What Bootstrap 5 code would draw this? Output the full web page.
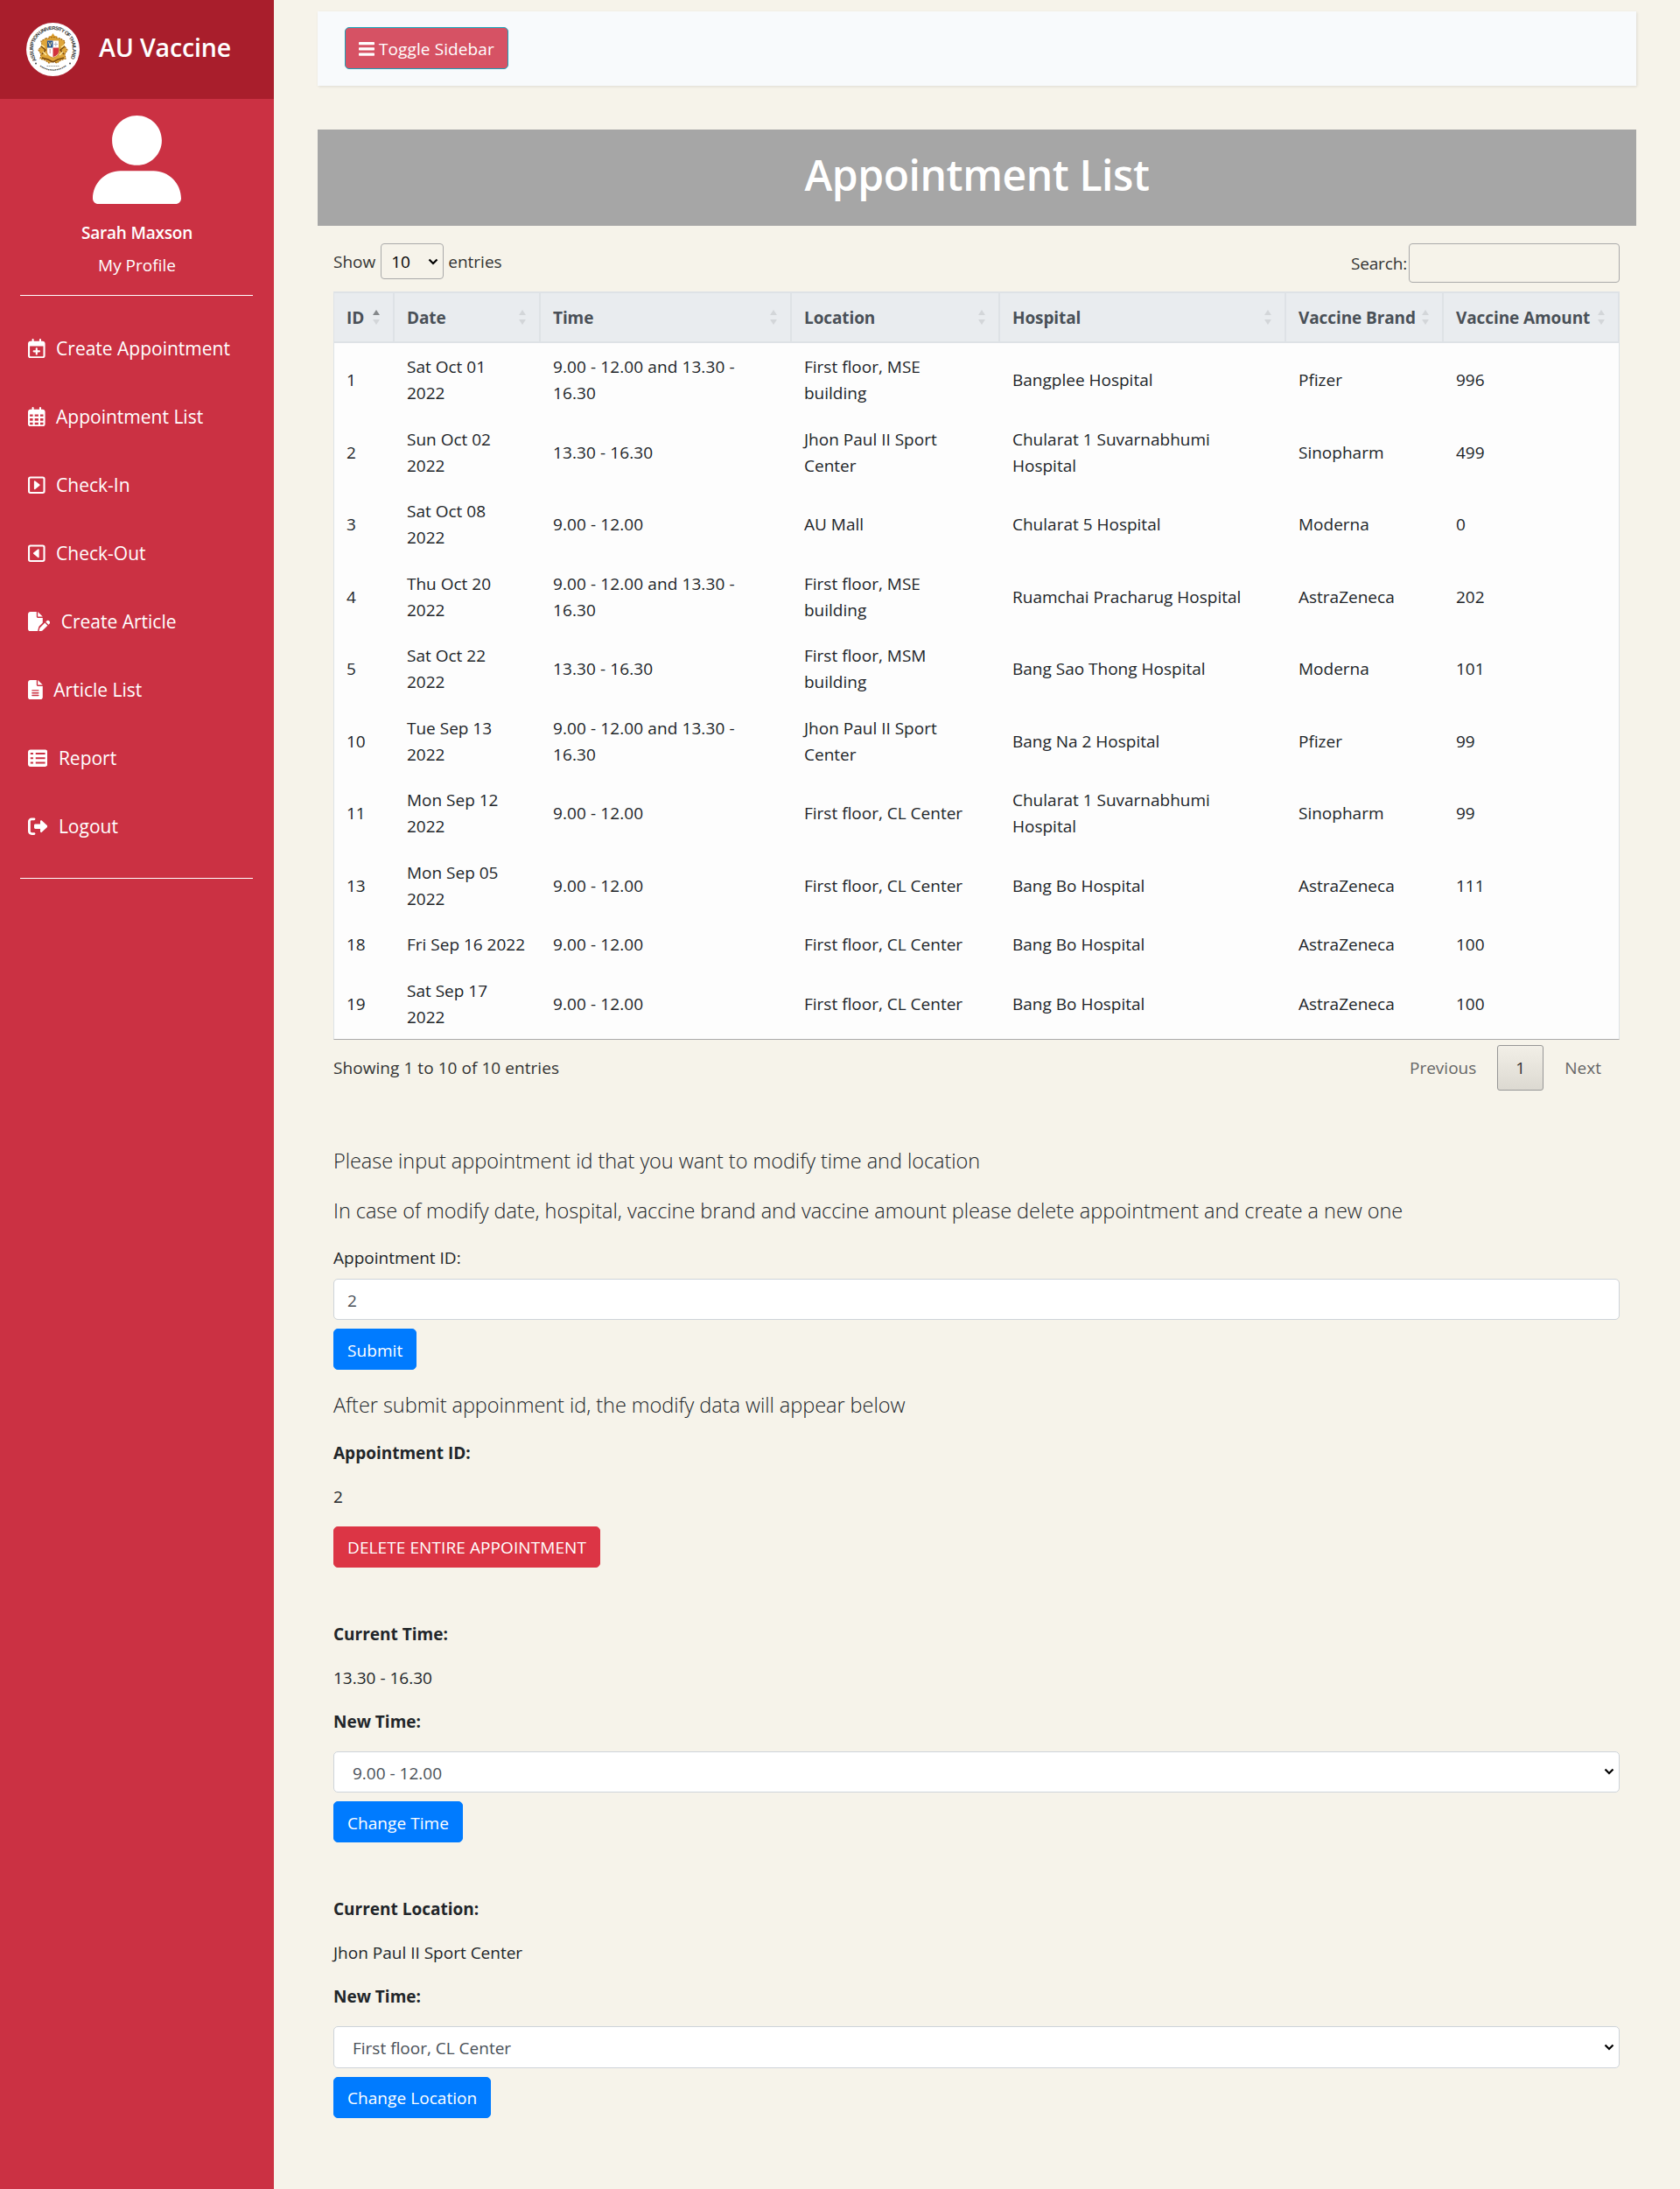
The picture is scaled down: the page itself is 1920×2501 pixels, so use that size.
<!DOCTYPE html>
<html lang="en">
<head>
<meta charset="utf-8">
<meta name="viewport" content="width=device-width, initial-scale=1">
<title>AU Vaccine - Appointment List</title>
<link href="https://cdn.jsdelivr.net/npm/bootstrap@5.3.0/dist/css/bootstrap.min.css" rel="stylesheet">
<style>
html{font-size:20px}
body{font-family:"Open Sans","Noto Sans",sans-serif;font-size:19px;line-height:30px;color:#212529;background:#f6f3ea}
p{padding-top:1px;margin-bottom:19px}

/* sidebar */
.side{width:313px;min-height:2501px;background:#cb3143;color:#fff}
.side-head{height:113px;background:#a91e2c;padding-left:30px}
.side-title{font-size:28.5px;font-weight:600;letter-spacing:-.15px;margin:0 0 6px 22px;line-height:36px}
.side-rule{height:1px;background:#fff;margin:0 24px 0 23px}
.avatar{display:block;width:101px;height:101px;margin:19px auto 18px}
.user-name{letter-spacing:-.2px;margin-bottom:6.5px}
.user-box{padding-bottom:19.5px}
.side-nav{padding:22px 0 19px}
.side-nav a{height:78px;font-size:21px;color:#fff;padding:0 0 2px 32px;text-decoration:none}
.side-nav svg{height:22.4px;margin-right:12.500px;fill:currentColor}

/* main column */
.main-area{padding:13px 50px 0}
.topbar{height:85px;background:#f8fafc;box-shadow:1px 1px 3px rgba(0,0,0,.1);padding:18px 31px}
.btn{--bs-btn-font-size:19px;--bs-btn-line-height:30px;--bs-btn-border-radius:5px;padding:8.5px 15px 6.5px;height:47px;white-space:nowrap;letter-spacing:.06px}
.btn-primary{--bs-btn-bg:#007bff;--bs-btn-border-color:#007bff}
.btn-danger{--bs-btn-bg:#dc3545;--bs-btn-border-color:#dc3545;letter-spacing:.09px}
.btn-toggle{background:#d65264;border:1px solid #17a2b8;color:#fff;height:48px;letter-spacing:.1px}
.btn-toggle svg{margin:-4px 5px 0 0}
.page-title{margin-top:50px;height:110px;background:#a6a6a6;color:#fff}
.page-title h1{font-size:48px;font-weight:600;letter-spacing:-.43px;line-height:60px;margin:0 0 7px}
.body-area{padding:0 19px 0 18px}

/* data table */
.tools{padding-top:20px;height:75px;color:#333}
.tools span{padding-top:1px}
.chev{--bs-form-select-bg-img:url("data:image/svg+xml,%3Csvg xmlns='http://www.w3.org/2000/svg' viewBox='0 0 12 8'%3E%3Cpath d='M1.500 1.500 6 6l4.500-4.500' fill='none' stroke='%23000' stroke-width='2.200'/%3E%3C/svg%3E");background-image:var(--bs-form-select-bg-img);background-size:12px 8px}
.len-select{width:72px;height:41px;border:1px solid #aaa;border-radius:4px;background-color:transparent;background-position:right 5px center;padding:1px 0 0 11px;margin:0 5px 0 6px;color:#000;font-size:19px}
.search-lbl{letter-spacing:-.15px}
.search-box{width:241px;height:45px;border:1px solid #aaa;border-radius:4px;background:transparent;margin-left:2px}
.appt{table-layout:fixed;width:1470px;border-collapse:separate;border-spacing:0;border:1px solid #dee2e6;border-bottom-color:#aaa;background:#fdfdfd}
.appt th{height:58px;background:#e9ecef;border:solid #dee2e6;border-width:1px 2px 2px 0;color:#495057;font-weight:700;letter-spacing:-.1px;padding:1px 0 0 14px;white-space:nowrap}
.appt th:last-child{border-right-width:1px}
.appt td{height:82.5px;padding:2px 0 0 14px;vertical-align:middle;white-space:nowrap}
.appt td:nth-child(3){letter-spacing:.1px}
.appt .one-line td{height:52.5px}
.sorter{display:flex;flex-direction:column;gap:5px;margin:-2px 15px 0 0}
.sorter i{border:4px solid transparent}
.sorter i:first-child{border-top:0;border-bottom:6px solid #d3d6d9}
.sorter i:last-child{border-bottom:0;border-top:6px solid #d3d6d9}
.sorter.asc i:first-child{border-bottom-color:#85888b}
.foot{height:118.5px;color:#333}
.foot-info{padding-top:17px;letter-spacing:.06px}
.pager{padding:5.5px 21px 0 0;color:#666}
.page-no{width:53px;height:52px;border:1px solid #979797;border-radius:3px;background:linear-gradient(#f2efe7,#dcd9d1);line-height:51px;text-align:center;margin:0 24px;color:#333}

/* forms */
.note{font-size:23.5px;font-weight:300;line-height:37.5px;letter-spacing:-.04px}
.note-after{margin-top:21px}
.field{height:47.5px;border:1px solid #ced4da;border-radius:5px;background-color:#fff;color:#495057;font-size:19px;padding:3px 4px 0 15px;margin-bottom:10px}
.pick{padding-left:21px;background-position:right 5px center}
.fld-label{display:block;margin-bottom:9px}
.step-gap{margin-bottom:60px}
</style>
</head>
<body>
<div class="d-flex">
<aside class="side flex-shrink-0">
  <div class="side-head d-flex align-items-center">
    <svg width="61" height="61" viewBox="0 0 61 61">
      <defs>
        <path id="arcTop" d="M11.800 43A22.500 22.500 0 1 1 49.200 43"/>
        <path id="arcLow" d="M12.500 48.500A25.500 25.500 0 0 0 48.500 48.500"/>
      </defs>
      <circle cx="30.500" cy="30.500" r="30.500" fill="#fff"/>
      <text font-family="Liberation Sans" font-size="5.800" font-weight="700" fill="#333"><textPath href="#arcTop" textLength="94">ASSUMPTION UNIVERSITY OF THAILAND</textPath></text>
      <text font-family="Noto Sans" font-size="5" font-weight="700" fill="#444"><textPath href="#arcLow" startOffset="3" textLength="34">••••••••••••••••</textPath></text>
      <circle cx="11" cy="46.500" r="1" fill="#444"/><circle cx="50" cy="46.500" r="1" fill="#444"/>
      <path d="M23.500 49.500h14" stroke="#999" stroke-width="1" stroke-dasharray="1.500 .6"/>
      <path d="M30.500 12l2 3 3 .5-1 3h-8l-1-3 3-.5z" fill="#d99a2b"/>
      <path d="M22 18l8.500-1.500L39 18l5 3-1 5 4 5-3 5 1 5-6 2-4 3-4.500-2-4.500 2-4-3-6-2 1-5-3-5 4-5-1-5z" fill="#dfa63a" stroke="#a96d18" stroke-width="1.200" stroke-dasharray="2 1"/>
      <path d="M17 27l5 4-4 5M44 27l-5 4 4 5M18 40l7 2 5.500 3 5.500-3 7-2" fill="none" stroke="#7a4a12" stroke-width="1.500"/>
      <path d="M17 25l4 3M44 25l-4 3M19 33l4 4M42 33l-4 4" stroke="#ffe9a0" stroke-width="1.500"/>
      <path d="M23.500 20h14v13q0 5-7 7-7-2-7-7z" fill="#fff" stroke="#c78a25" stroke-width=".8"/>
      <path d="M24 20.500h6.500v8H24z" fill="#2b568f"/>
      <path d="M30.500 28.500H37V33q0 4-6.500 6.300z" fill="#d2323c"/>
      <path d="M25.500 22l1.700 5 1.700-5" fill="none" stroke="#e9dca0" stroke-width="1"/>
      <path d="M33.800 22v5M31.500 24.500h4.600" stroke="#b9b9c4" stroke-width="1"/>
      <path d="M27.200 30v5" stroke="#d9a0a0" stroke-width="1.200"/>
    </svg>
    <span class="side-title">AU Vaccine</span>
  </div>
  <div class="user-box text-center">
    <svg class="avatar" viewBox="0 0 512 512" fill="#fff"><path d="M256 288c79.500 0 144-64.500 144-144S335.500 0 256 0 112 64.500 112 144s64.500 144 144 144zM352 320H160C71.600 320 0 391.600 0 480c0 17.700 14.300 32 32 32h448c17.700 0 32-14.300 32-32 0-88.400-71.600-160-160-160z"/></svg>
    <div class="user-name fw-semibold">Sarah Maxson</div>
    <div>My Profile</div>
  </div>
  <div class="side-rule"></div>
  <nav class="side-nav">
    <a href="#" class="d-flex align-items-center"><svg viewBox="0 0 448 512"><path d="M224 232C237.300 232 248 242.700 248 256V304H296C309.300 304 320 314.700 320 328C320 341.300 309.300 352 296 352H248V400C248 413.300 237.300 424 224 424C210.700 424 200 413.300 200 400V352H152C138.700 352 128 341.300 128 328C128 314.700 138.700 304 152 304H200V256C200 242.700 210.700 232 224 232zM152 64H296V24C296 10.750 306.700 0 320 0C333.300 0 344 10.750 344 24V64H384C419.300 64 448 92.650 448 128V448C448 483.300 419.300 512 384 512H64C28.650 512 0 483.300 0 448V128C0 92.650 28.650 64 64 64H104V24C104 10.750 114.700 0 128 0C141.300 0 152 10.750 152 24V64zM48 448C48 456.800 55.160 464 64 464H384C392.800 464 400 456.800 400 448V192H48V448z"/></svg>Create Appointment</a>
    <a href="#" class="d-flex align-items-center"><svg viewBox="0 0 448 512"><path d="M152 64H296V24C296 10.750 306.700 0 320 0C333.300 0 344 10.750 344 24V64H384C419.300 64 448 92.650 448 128V448C448 483.300 419.300 512 384 512H64C28.650 512 0 483.300 0 448V128C0 92.650 28.650 64 64 64H104V24C104 10.750 114.700 0 128 0C141.300 0 152 10.750 152 24V64zM48 248H128V192H48V248zM48 296V360H128V296H48zM176 296V360H272V296H176zM320 296V360H400V296H320zM400 192H320V248H400V192zM400 408H320V464H384C392.800 464 400 456.800 400 448V408zM272 408H176V464H272V408zM128 408H48V448C48 456.800 55.160 464 64 464H128V408zM272 192H176V248H272V192z"/></svg>Appointment List</a>
    <a href="#" class="d-flex align-items-center"><svg viewBox="0 0 448 512"><rect x="24" y="56" width="400" height="400" rx="40" fill="none" stroke="#fff" stroke-width="48"/><path d="M176 160v192l118-96z" stroke="#fff" stroke-width="36" stroke-linejoin="round"/></svg>Check-In</a>
    <a href="#" class="d-flex align-items-center"><svg viewBox="0 0 448 512"><rect x="24" y="56" width="400" height="400" rx="40" fill="none" stroke="#fff" stroke-width="48"/><path d="M272 160v192l-118-96z" stroke="#fff" stroke-width="36" stroke-linejoin="round"/></svg>Check-Out</a>
    <a href="#" class="d-flex align-items-center"><svg viewBox="0 0 576 512"><path d="M0 64C0 28.700 28.700 0 64 0H224V128c0 17.700 14.300 32 32 32H384V285.700l-86.800 86.800c-10.300 10.300-17.500 23.100-21 37.200l-18.700 74.900c-2.300 9.200-1.800 18.800 1.300 27.500H64c-35.300 0-64-28.700-64-64V64zM384 128H256V0L384 128zM549.800 235.700l14.400 14.400c15.600 15.600 15.600 40.900 0 56.600l-29.400 29.400-71-71 29.400-29.400c15.600-15.600 40.900-15.600 56.600 0zM311.900 417L441.100 287.800l71 71L382.900 487.900c-4.100 4.100-9.200 7-14.900 8.400l-60.100 15c-5.500 1.400-11.200-.2-15.200-4.200s-5.600-9.700-4.200-15.200l15-60.100c1.400-5.600 4.300-10.800 8.400-14.900z"/></svg>Create Article</a>
    <a href="#" class="d-flex align-items-center"><svg viewBox="0 0 384 512"><path fill-rule="evenodd" d="M64 0C28.700 0 0 28.700 0 64V448c0 35.300 28.700 64 64 64H320c35.300 0 64-28.700 64-64V160H256c-17.700 0-32-14.300-32-32V0H64zM256 0V128H384L256 0zM112 256H272c8.800 0 16 7.200 16 16s-7.200 16-16 16H112c-8.800 0-16-7.200-16-16s7.200-16 16-16zm0 64H272c8.800 0 16 7.200 16 16s-7.200 16-16 16H112c-8.800 0-16-7.200-16-16s7.200-16 16-16zm0 64H272c8.800 0 16 7.200 16 16s-7.200 16-16 16H112c-8.800 0-16-7.200-16-16s7.200-16 16-16z"/></svg>Article List</a>
    <a href="#" class="d-flex align-items-center"><svg viewBox="0 0 512 512"><path fill-rule="evenodd" d="M64 32h384c35.300 0 64 28.700 64 64v320c0 35.300-28.700 64-64 64H64c-35.300 0-64-28.700-64-64V96c0-35.300 28.700-64 64-64zM64 112v48h72v-48zM200 112v48h248v-48zM64 232v48h72v-48zM200 232v48h248v-48zM64 352v48h72v-48zM200 352v48h248v-48z"/></svg>Report</a>
    <a href="#" class="d-flex align-items-center"><svg viewBox="0 0 512 512"><path d="M96 480h64C177.700 480 192 465.700 192 448S177.700 416 160 416H96c-17.670 0-32-14.330-32-32V128c0-17.670 14.330-32 32-32h64C177.700 96 192 81.670 192 64S177.700 32 160 32H96C42.980 32 0 74.980 0 128v256C0 437 42.980 480 96 480zM504.800 238.500l-144.100-136c-6.975-6.578-17.200-8.375-26-4.594c-8.803 3.797-14.510 12.470-14.510 22.050l-.0918 72l-128-.001c-17.690 0-32.020 14.330-32.020 32v64c0 17.670 14.340 32 32.020 32l128 .001l.0918 71.100c0 9.578 5.707 18.250 14.510 22.050c8.803 3.781 19.030 1.984 26-4.594l144.100-136C514.400 264.400 514.400 247.600 504.800 238.500z"/></svg>Logout</a>
  </nav>
  <div class="side-rule"></div>
</aside>

<main class="main-area flex-grow-1">
  <div class="topbar">
    <button class="btn btn-toggle"><svg width="18" height="16" viewBox="0 0 18 16" fill="#fff"><rect y="0" width="18" height="3.300" rx=".8"/><rect y="6.200" width="18" height="3.300" rx=".8"/><rect y="12.400" width="18" height="3.300" rx=".8"/></svg>Toggle Sidebar</button>
  </div>
  <div class="page-title d-flex align-items-center justify-content-center"><h1>Appointment List</h1></div>

  <div class="body-area">
    <div class="tools d-flex justify-content-between align-items-start">
      <label class="d-flex align-items-center"><span>Show</span><select class="form-select chev len-select"><option>10</option></select><span>entries</span></label>
      <label class="d-flex align-items-center"><span class="search-lbl">Search:</span><input class="search-box" type="search"></label>
    </div>

    <table class="appt">
      <colgroup><col style="width:69px"><col style="width:167px"><col style="width:287px"><col style="width:238px"><col style="width:327px"><col style="width:180px"><col style="width:200px"></colgroup>
      <thead>
        <tr>
          <th><div class="d-flex justify-content-between align-items-center">ID<span class="sorter asc"><i></i><i></i></span></div></th>
          <th><div class="d-flex justify-content-between align-items-center">Date<span class="sorter"><i></i><i></i></span></div></th>
          <th><div class="d-flex justify-content-between align-items-center">Time<span class="sorter"><i></i><i></i></span></div></th>
          <th><div class="d-flex justify-content-between align-items-center">Location<span class="sorter"><i></i><i></i></span></div></th>
          <th><div class="d-flex justify-content-between align-items-center">Hospital<span class="sorter"><i></i><i></i></span></div></th>
          <th><div class="d-flex justify-content-between align-items-center">Vaccine Brand<span class="sorter"><i></i><i></i></span></div></th>
          <th><div class="d-flex justify-content-between align-items-center">Vaccine Amount<span class="sorter"><i></i><i></i></span></div></th>
        </tr>
      </thead>
      <tbody>
        <tr><td>1</td><td>Sat Oct 01<br>2022</td><td>9.00 - 12.00 and 13.30 -<br>16.30</td><td>First floor, MSE<br>building</td><td>Bangplee Hospital</td><td>Pfizer</td><td>996</td></tr>
        <tr><td>2</td><td>Sun Oct 02<br>2022</td><td>13.30 - 16.30</td><td>Jhon Paul II Sport<br>Center</td><td>Chularat 1 Suvarnabhumi<br>Hospital</td><td>Sinopharm</td><td>499</td></tr>
        <tr><td>3</td><td>Sat Oct 08<br>2022</td><td>9.00 - 12.00</td><td>AU Mall</td><td>Chularat 5 Hospital</td><td>Moderna</td><td>0</td></tr>
        <tr><td>4</td><td>Thu Oct 20<br>2022</td><td>9.00 - 12.00 and 13.30 -<br>16.30</td><td>First floor, MSE<br>building</td><td>Ruamchai Pracharug Hospital</td><td>AstraZeneca</td><td>202</td></tr>
        <tr><td>5</td><td>Sat Oct 22<br>2022</td><td>13.30 - 16.30</td><td>First floor, MSM<br>building</td><td>Bang Sao Thong Hospital</td><td>Moderna</td><td>101</td></tr>
        <tr><td>10</td><td>Tue Sep 13<br>2022</td><td>9.00 - 12.00 and 13.30 -<br>16.30</td><td>Jhon Paul II Sport<br>Center</td><td>Bang Na 2 Hospital</td><td>Pfizer</td><td>99</td></tr>
        <tr><td>11</td><td>Mon Sep 12<br>2022</td><td>9.00 - 12.00</td><td>First floor, CL Center</td><td>Chularat 1 Suvarnabhumi<br>Hospital</td><td>Sinopharm</td><td>99</td></tr>
        <tr><td>13</td><td>Mon Sep 05<br>2022</td><td>9.00 - 12.00</td><td>First floor, CL Center</td><td>Bang Bo Hospital</td><td>AstraZeneca</td><td>111</td></tr>
        <tr class="one-line"><td>18</td><td>Fri Sep 16 2022</td><td>9.00 - 12.00</td><td>First floor, CL Center</td><td>Bang Bo Hospital</td><td>AstraZeneca</td><td>100</td></tr>
        <tr><td>19</td><td>Sat Sep 17<br>2022</td><td>9.00 - 12.00</td><td>First floor, CL Center</td><td>Bang Bo Hospital</td><td>AstraZeneca</td><td>100</td></tr>
      </tbody>
    </table>

    <div class="foot d-flex justify-content-between align-items-start">
      <div class="foot-info">Showing 1 to 10 of 10 entries</div>
      <div class="pager d-flex align-items-center"><span>Previous</span><span class="page-no">1</span><span>Next</span></div>
    </div>

    <p class="note">Please input appointment id that you want to modify time and location</p>
    <p class="note">In case of modify date, hospital, vaccine brand and vaccine amount please delete appointment and create a new one</p>
    <label class="fld-label" for="apptId">Appointment ID:</label>
    <input id="apptId" class="form-control field" type="text" value="2">
    <button class="btn btn-primary d-block">Submit</button>

    <p class="note note-after">After submit appoinment id, the modify data will appear below</p>
    <p class="fw-bold">Appointment ID:</p>
    <p>2</p>
    <button class="btn btn-danger d-block step-gap">DELETE ENTIRE APPOINTMENT</button>

    <p class="fw-bold">Current Time:</p>
    <p>13.30 - 16.30</p>
    <p class="fw-bold">New Time:</p>
    <select class="form-select chev field pick"><option>9.00 - 12.00</option></select>
    <button class="btn btn-primary d-block step-gap">Change Time</button>

    <p class="fw-bold">Current Location:</p>
    <p>Jhon Paul II Sport Center</p>
    <p class="fw-bold">New Time:</p>
    <select class="form-select chev field pick"><option>First floor, CL Center</option></select>
    <button class="btn btn-primary d-block">Change Location</button>
  </div>
</main>
</div>
<script src="https://cdn.jsdelivr.net/npm/bootstrap@5.3.0/dist/js/bootstrap.bundle.min.js"></script>
</body>
</html>
